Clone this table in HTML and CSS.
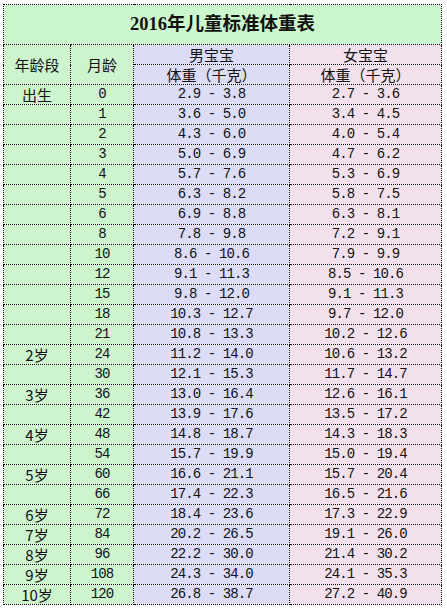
FILE: index.html
```html
<!DOCTYPE html>
<html lang="zh">
<head>
<meta charset="utf-8">
<title>2016年儿童标准体重表</title>
<link rel="stylesheet" href="styles.css">
</head>
<body>
<table class="chart">
  <colgroup>
    <col class="c-age"><col class="c-month"><col class="c-boy"><col class="c-girl">
  </colgroup>
  <thead>
    <tr class="title-row"><th colspan="4" class="title">2016年儿童标准体重表</th></tr>
    <tr class="head-row">
      <th rowspan="2" class="g cn">年龄段</th>
      <th rowspan="2" class="g cn">月龄</th>
      <th class="b cn">男宝宝</th>
      <th class="p cn">女宝宝</th>
    </tr>
    <tr class="head-row">
      <th class="b cn">体重（千克）</th>
      <th class="p cn">体重（千克）</th>
    </tr>
  </thead>
  <tbody>
    <tr><td class="g cn">出生</td><td class="g num">0</td><td class="b num">2.9 - 3.8</td><td class="p num">2.7 - 3.6</td></tr>
    <tr><td class="g"></td><td class="g num">1</td><td class="b num">3.6 - 5.0</td><td class="p num">3.4 - 4.5</td></tr>
    <tr><td class="g"></td><td class="g num">2</td><td class="b num">4.3 - 6.0</td><td class="p num">4.0 - 5.4</td></tr>
    <tr><td class="g"></td><td class="g num">3</td><td class="b num">5.0 - 6.9</td><td class="p num">4.7 - 6.2</td></tr>
    <tr><td class="g"></td><td class="g num">4</td><td class="b num">5.7 - 7.6</td><td class="p num">5.3 - 6.9</td></tr>
    <tr><td class="g"></td><td class="g num">5</td><td class="b num">6.3 - 8.2</td><td class="p num">5.8 - 7.5</td></tr>
    <tr><td class="g"></td><td class="g num">6</td><td class="b num">6.9 - 8.8</td><td class="p num">6.3 - 8.1</td></tr>
    <tr><td class="g"></td><td class="g num">8</td><td class="b num">7.8 - 9.8</td><td class="p num">7.2 - 9.1</td></tr>
    <tr><td class="g"></td><td class="g num">10</td><td class="b num">8.6 - 10.6</td><td class="p num">7.9 - 9.9</td></tr>
    <tr><td class="g"></td><td class="g num">12</td><td class="b num">9.1 - 11.3</td><td class="p num">8.5 - 10.6</td></tr>
    <tr><td class="g"></td><td class="g num">15</td><td class="b num">9.8 - 12.0</td><td class="p num">9.1 - 11.3</td></tr>
    <tr><td class="g"></td><td class="g num">18</td><td class="b num">10.3 - 12.7</td><td class="p num">9.7 - 12.0</td></tr>
    <tr><td class="g"></td><td class="g num">21</td><td class="b num">10.8 - 13.3</td><td class="p num">10.2 - 12.6</td></tr>
    <tr><td class="g cn">2岁</td><td class="g num">24</td><td class="b num">11.2 - 14.0</td><td class="p num">10.6 - 13.2</td></tr>
    <tr><td class="g"></td><td class="g num">30</td><td class="b num">12.1 - 15.3</td><td class="p num">11.7 - 14.7</td></tr>
    <tr><td class="g cn">3岁</td><td class="g num">36</td><td class="b num">13.0 - 16.4</td><td class="p num">12.6 - 16.1</td></tr>
    <tr><td class="g"></td><td class="g num">42</td><td class="b num">13.9 - 17.6</td><td class="p num">13.5 - 17.2</td></tr>
    <tr><td class="g cn">4岁</td><td class="g num">48</td><td class="b num">14.8 - 18.7</td><td class="p num">14.3 - 18.3</td></tr>
    <tr><td class="g"></td><td class="g num">54</td><td class="b num">15.7 - 19.9</td><td class="p num">15.0 - 19.4</td></tr>
    <tr><td class="g cn">5岁</td><td class="g num">60</td><td class="b num">16.6 - 21.1</td><td class="p num">15.7 - 20.4</td></tr>
    <tr><td class="g"></td><td class="g num">66</td><td class="b num">17.4 - 22.3</td><td class="p num">16.5 - 21.6</td></tr>
    <tr><td class="g cn">6岁</td><td class="g num">72</td><td class="b num">18.4 - 23.6</td><td class="p num">17.3 - 22.9</td></tr>
    <tr><td class="g cn">7岁</td><td class="g num">84</td><td class="b num">20.2 - 26.5</td><td class="p num">19.1 - 26.0</td></tr>
    <tr><td class="g cn">8岁</td><td class="g num">96</td><td class="b num">22.2 - 30.0</td><td class="p num">21.4 - 30.2</td></tr>
    <tr><td class="g cn">9岁</td><td class="g num">108</td><td class="b num">24.3 - 34.0</td><td class="p num">24.1 - 35.3</td></tr>
    <tr><td class="g cn">10岁</td><td class="g num">120</td><td class="b num">26.8 - 38.7</td><td class="p num">27.2 - 40.9</td></tr>
  </tbody>
</table>
</body>
</html>
```
FILE: styles.css
```css
html, body {
  margin: 0;
  padding: 0;
  background: #ffffff;
}
body {
  padding: 4px 0 0 3px;
  color: #111111;
}
.chart {
  border-collapse: collapse;
  table-layout: fixed;
  width: 438px;
}
.c-age { width: 67px; }
.c-month { width: 63px; }
.c-boy { width: 156px; }
.c-girl { width: 152px; }
.chart th, .chart td {
  border: 1px dotted #000000;
  padding: 0;
  height: 19px;
  text-align: center;
  vertical-align: middle;
  font-weight: normal;
  white-space: nowrap;
  overflow: hidden;
  line-height: 19px;
}
.chart .title {
  height: 39px;
  background: #ccf6cc;
  font-family: "Liberation Serif", "Noto Sans CJK SC", serif;
  font-weight: bold;
  font-size: 18.5px;
  line-height: 39px;
}
.g { background: #cdf4cd; }
.b { background: #dcdcf6; }
.p { background: #f2e1ec; }
.cn {
  font-family: "Noto Sans CJK SC", sans-serif;
  font-size: 15px;
}
.num {
  font-family: "Liberation Mono", monospace;
  font-size: 14px;
  letter-spacing: -0.9px;
}
```
